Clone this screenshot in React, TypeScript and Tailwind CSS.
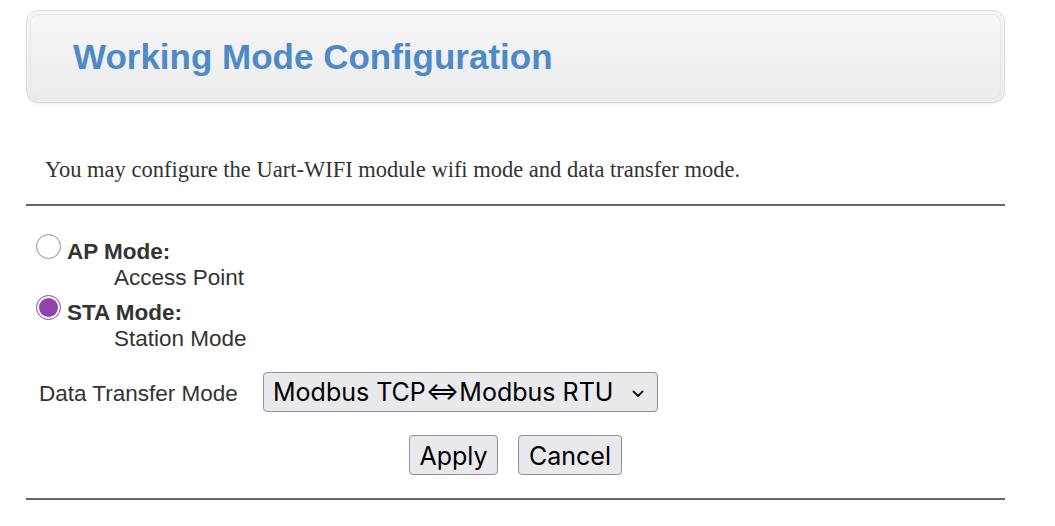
import { useState } from 'react';

export default function App() {
  const [mode, setMode] = useState<'ap' | 'sta'>('sta');

  const radio = (active: boolean) =>
    active
      ? 'w-[25px] h-[25px] rounded-full border border-[#8e44ad] bg-white flex items-center justify-center shrink-0'
      : 'w-[25px] h-[25px] rounded-full border border-[#8f8f9d] bg-white shrink-0';

  return (
    <div className="w-[1055px] h-[526px] bg-white overflow-hidden font-['Liberation_Sans',Arial,sans-serif] text-[#333]">
      <div className="ml-[26px] w-[979px] pt-[10px]">
        {/* Header */}
        <div className="h-[93px] rounded-[12px] border border-[#dcdcdc] bg-gradient-to-b from-[#f6f6f6] to-[#ececec] p-[3px] shadow-[0_1px_2px_rgba(0,0,0,0.08)]">
          <div className="h-full rounded-[9px] border border-[#e6e6e6] flex items-center pl-[42px]">
            <h1 className="text-[35px] font-bold text-[#4e8ac8] leading-none">Working Mode Configuration</h1>
          </div>
        </div>

        {/* Description */}
        <p className="mt-[53px] pl-[19px] font-['Liberation_Serif',serif] text-[22.5px] leading-[28px] text-[#333]">
          You may configure the Uart-WIFI module wifi mode and data transfer mode.
        </p>
        <div className="mt-[20px] h-[2px] bg-[#666]" />

        {/* Wifi mode */}
        <div className="mt-[28px] pl-[10px]">
          <label className="flex items-start gap-[6px] cursor-pointer" onClick={() => setMode('ap')}>
            <span className={radio(mode === 'ap')}>
              {mode === 'ap' && <span className="w-[19px] h-[19px] rounded-full bg-[#8e44ad]" />}
            </span>
            <div className="pt-[6px]">
              <div className="text-[22.5px] font-bold leading-[24px]">AP Mode:</div>
              <div className="pl-[47px] text-[22.5px] leading-[28px]">Access Point</div>
            </div>
          </label>
          <label className="mt-[3px] flex items-start gap-[6px] cursor-pointer" onClick={() => setMode('sta')}>
            <span className={radio(mode === 'sta')}>
              {mode === 'sta' && <span className="w-[19px] h-[19px] rounded-full bg-[#8e44ad]" />}
            </span>
            <div className="pt-[6px]">
              <div className="text-[22.5px] font-bold leading-[24px]">STA Mode:</div>
              <div className="pl-[47px] text-[22.5px] leading-[28px]">Station Mode</div>
            </div>
          </label>
        </div>

        {/* Data transfer mode */}
        <div className="mt-[19px] flex items-center pl-[13px]">
          <span className="w-[224px] text-[22.5px] leading-[28px] pt-[3px]">Data Transfer Mode</span>
          <div className="relative w-[395px] h-[40px] rounded-[4px] border border-[#8f8f9d] bg-[#e9e9ed] flex items-center pl-[9px] pt-[2px] font-['Inter',sans-serif] text-[25px] text-black">
            Modbus TCP⇔Modbus RTU
            <svg className="absolute right-[13px] top-[17px]" width="12" height="8" viewBox="0 0 12 8" fill="none">
              <path d="M1.5 1.5 L6 6 L10.5 1.5" stroke="#111" strokeWidth="1.8" strokeLinecap="round" strokeLinejoin="round" />
            </svg>
          </div>
        </div>

        {/* Buttons */}
        <div className="mt-[23px] flex justify-center gap-[20px] font-['Inter',sans-serif] text-[25px] text-black">
          <button className="h-[40px] w-[89px] pt-[2px] rounded-[4px] border border-[#8f8f9d] bg-[#e9e9ed]">Apply</button>
          <button className="h-[40px] w-[104px] pt-[2px] rounded-[4px] border border-[#8f8f9d] bg-[#e9e9ed]">Cancel</button>
        </div>

        <div className="mt-[23px] h-[2px] bg-[#666]" />
      </div>
    </div>
  );
}
